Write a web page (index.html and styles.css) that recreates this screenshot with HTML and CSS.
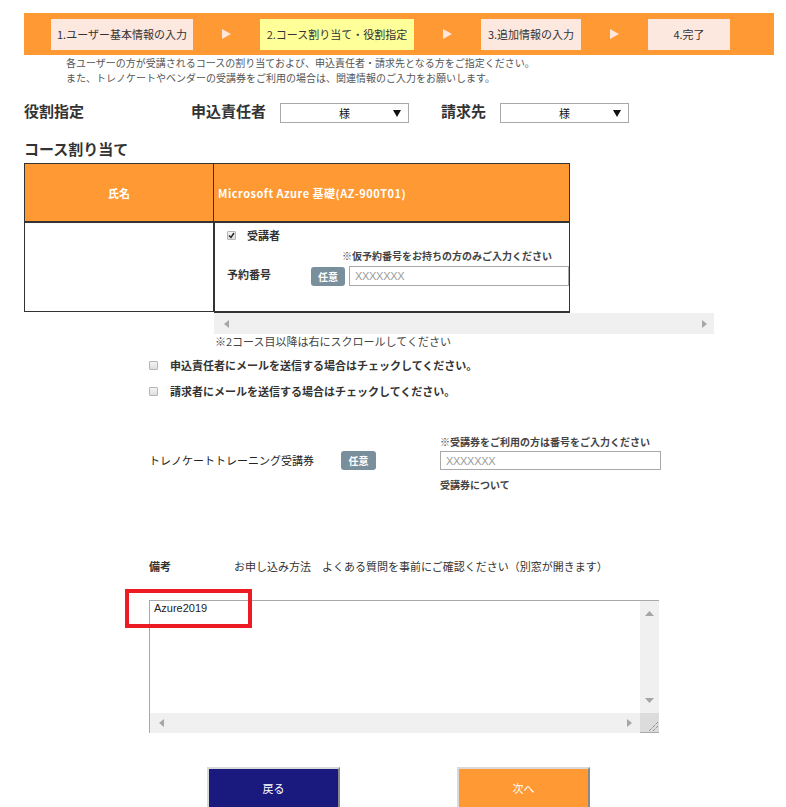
FILE: index.html
```html
<!DOCTYPE html>
<html lang="ja">
<head>
<meta charset="utf-8">
<title>コース割り当て・役割指定</title>
<link rel="stylesheet" href="styles.css">
</head>
<body>
<div class="page">
  <div class="steps">
    <div class="step s1">1.ユーザー基本情報の入力</div>
    <div class="arrow"><svg width="9" height="10" viewBox="0 0 9 10"><polygon points="0,0 9,5 0,10" fill="#fde6dc"/></svg></div>
    <div class="step s2 current">2.コース割り当て・役割指定</div>
    <div class="arrow"><svg width="9" height="10" viewBox="0 0 9 10"><polygon points="0,0 9,5 0,10" fill="#fde6dc"/></svg></div>
    <div class="step s3">3.追加情報の入力</div>
    <div class="arrow"><svg width="9" height="10" viewBox="0 0 9 10"><polygon points="0,0 9,5 0,10" fill="#fde6dc"/></svg></div>
    <div class="step s4">4.完了</div>
  </div>

  <div class="notice">
    <p>各ユーザーの方が受講されるコースの割り当ておよび、申込責任者・請求先となる方をご指定ください。</p>
    <p>また、トレノケートやベンダーの受講券をご利用の場合は、関連情報のご入力をお願いします。</p>
  </div>

  <div class="roles">
    <h2 class="roles-title">役割指定</h2>
    <span class="role-label">申込責任者</span>
    <div class="select"><span class="select-value">様</span><svg class="select-arrow" width="8" height="7" viewBox="0 0 8 7"><polygon points="0,0 8,0 4,7" fill="#111"/></svg></div>
    <span class="role-label billing">請求先</span>
    <div class="select"><span class="select-value">様</span><svg class="select-arrow" width="8" height="7" viewBox="0 0 8 7"><polygon points="0,0 8,0 4,7" fill="#111"/></svg></div>
  </div>

  <h2 class="section-title">コース割り当て</h2>

  <div class="course-area">
    <div class="name-col">
      <div class="th center">氏名</div>
      <div class="td"></div>
    </div>
    <div class="course-scroll">
      <div class="course-col">
        <div class="th course-th">Microsoft Azure 基礎(AZ-900T01)</div>
        <div class="td course-cell">
          <div class="attendee"><span class="cb checked"><svg width="7" height="7" viewBox="0 0 7 7"><polyline points="1,3.5 3,5.5 6,1" fill="none" stroke="#222" stroke-width="1.4"/></svg></span><span>受講者</span></div>
          <p class="cell-note">※仮予約番号をお持ちの方のみご入力ください</p>
          <div class="reserve-row">
            <span class="reserve-label">予約番号</span>
            <span class="badge">任意</span>
            <input class="text-input reserve-input" type="text" placeholder="XXXXXXX">
          </div>
        </div>
      </div>
      <div class="hbar course-hbar">
        <svg width="5" height="8" viewBox="0 0 5 8"><polygon points="5,0 0,4 5,8" fill="#a6a6a6"/></svg>
        <svg width="5" height="8" viewBox="0 0 5 8"><polygon points="0,0 5,4 0,8" fill="#a6a6a6"/></svg>
      </div>
    </div>
  </div>

  <p class="scroll-note">※2コース目以降は右にスクロールしてください</p>

  <div class="mail-checks">
    <div class="mail-row"><span class="cb"></span><span>申込責任者にメールを送信する場合はチェックしてください。</span></div>
    <div class="mail-row"><span class="cb"></span><span>請求者にメールを送信する場合はチェックしてください。</span></div>
  </div>

  <div class="voucher">
    <span class="voucher-label">トレノケートトレーニング受講券</span>
    <span class="badge voucher-badge">任意</span>
    <div class="voucher-field">
      <p class="field-note">※受講券をご利用の方は番号をご入力ください</p>
      <input class="text-input voucher-input" type="text" placeholder="XXXXXXX">
      <p class="field-link">受講券について</p>
    </div>
  </div>

  <div class="remarks">
    <span class="remarks-label">備考</span>
    <span class="remarks-text">お申し込み方法　よくある質問を事前にご確認ください（別窓が開きます）</span>
  </div>

  <div class="memo">
    <div class="memo-grid">
      <textarea class="memo-text">Azure2019</textarea>
      <div class="vbar">
        <svg width="9" height="5" viewBox="0 0 9 5"><polygon points="0,5 4.5,0 9,5" fill="#a6a6a6"/></svg>
        <svg width="9" height="5" viewBox="0 0 9 5"><polygon points="0,0 9,0 4.5,5" fill="#a6a6a6"/></svg>
      </div>
      <div class="hbar memo-hbar">
        <svg width="5" height="8" viewBox="0 0 5 8"><polygon points="5,0 0,4 5,8" fill="#a6a6a6"/></svg>
        <svg width="5" height="8" viewBox="0 0 5 8"><polygon points="0,0 5,4 0,8" fill="#a6a6a6"/></svg>
      </div>
      <div class="corner"><svg width="12" height="12" viewBox="0 0 12 12"><line x1="11" y1="2" x2="2" y2="11" stroke="#666" stroke-width="1" stroke-dasharray="1 1"/><line x1="11" y1="6" x2="6" y2="11" stroke="#666" stroke-width="1" stroke-dasharray="1 1"/></svg></div>
    </div>
    <div class="highlight"></div>
  </div>

  <div class="actions">
    <button class="btn back" type="button">戻る</button>
    <button class="btn next" type="button">次へ</button>
  </div>
</div>
</body>
</html>
```

FILE: styles.css
```css
* { box-sizing: border-box; }

html, body {
  margin: 0;
  padding: 0;
  background: #fff;
}

body {
  font-family: "Noto Sans CJK JP", "Noto Sans", sans-serif;
  color: #333;
  font-size: 11px;
}

p { margin: 0; }
h2 { margin: 0; }

.page {
  width: 786px;
  padding-top: 13px;
}

/* step bar */
.steps {
  margin-left: 24px;
  width: 750px;
  height: 42px;
  background: #ff9933;
  display: flex;
  align-items: center;
  padding-left: 27px;
}

.step {
  height: 31px;
  background: #fde8df;
  display: flex;
  align-items: center;
  justify-content: center;
  font-size: 11px;
  color: #333;
  white-space: nowrap;
}

.step.current { background: #ffff99; }
.s1 { width: 142px; }
.s2 { width: 154px; }
.s3 { width: 100px; }
.s4 { width: 82px; }

.arrow {
  width: 67px;
  display: flex;
  justify-content: center;
  align-items: center;
}

.arrow svg { display: block; }

/* notice */
.notice {
  padding-left: 66px;
  font-size: 10px;
  line-height: 15px;
  color: #555;
}

/* roles */
.roles {
  margin-top: 18px;
  margin-left: 24px;
  display: flex;
  align-items: center;
  height: 20px;
}

.roles-title {
  width: 167px;
  font-size: 15px;
  font-weight: bold;
  color: #333;
  line-height: 20px;
  position: relative;
  top: -2px;
}

.role-label {
  width: 89px;
  font-size: 15px;
  font-weight: bold;
  color: #333;
  line-height: 20px;
  position: relative;
  top: -2px;
}

.role-label.billing {
  width: 59px;
  margin-left: 32px;
}

.select {
  width: 129px;
  height: 20px;
  border: 1px solid #a9a9a9;
  background: #fff;
  display: grid;
  grid-template-columns: 1fr auto 1fr;
  align-items: center;
  padding-right: 7px;
}

.select-value {
  grid-column: 2;
  font-size: 11px;
  color: #111;
  line-height: 18px;
  margin-left: 7px;
}

.select-arrow {
  grid-column: 3;
  justify-self: end;
  display: block;
}

/* course */
.section-title {
  margin: 16px 0 4px 24px;
  font-size: 15px;
  font-weight: bold;
  line-height: 20px;
  color: #333;
}

.course-area {
  margin-left: 24px;
  display: flex;
  align-items: flex-start;
}

.name-col {
  width: 190px;
  border: 1px solid #333;
}

.th {
  height: 59px;
  background: #ff9933;
  color: #fff;
  font-weight: bold;
  font-size: 11px;
  display: flex;
  align-items: center;
  padding-left: 4px;
  border-bottom: 2px solid #333;
  white-space: nowrap;
}

.th.center {
  justify-content: center;
  padding-left: 0;
}

.course-th {
  letter-spacing: 0.5px;
}

.td {
  height: 88px;
  background: #fff;
}

.course-scroll {
  width: 500px;
}

.course-col {
  width: 356px;
  border: 1px solid #333;
  border-left: none;
  border-bottom-width: 2px;
}

.course-cell {
  padding: 4px 0 0 12px;
  border-left: 1px solid #333;
  height: 88px;
}

.attendee {
  display: flex;
  align-items: center;
  height: 16px;
  font-size: 11px;
  font-weight: bold;
  color: #333;
}

.cb {
  width: 9px;
  height: 9px;
  border: 1px solid #b5b5b5;
  border-radius: 1px;
  background: linear-gradient(#f4f4f4, #dedede);
  display: inline-flex;
  align-items: center;
  justify-content: center;
  flex: none;
}

.attendee .cb { margin-right: 11px; }

.cb svg { display: block; }

.cell-note {
  margin-top: 6px;
  margin-left: 115px;
  font-size: 10px;
  line-height: 14px;
  font-weight: bold;
  color: #444;
  white-space: nowrap;
}

.reserve-row {
  margin-top: 3px;
  display: flex;
  align-items: center;
}

.reserve-label {
  width: 84px;
  font-size: 11px;
  font-weight: bold;
  color: #333;
  position: relative;
  top: -2px;
}

.badge {
  width: 34px;
  height: 19px;
  border-radius: 3px;
  background: #7a8f9c;
  color: #fff;
  font-size: 10px;
  font-weight: bold;
  display: inline-flex;
  align-items: center;
  justify-content: center;
  flex: none;
}

.text-input {
  height: 20px;
  border: 1px solid #a9a9a9;
  padding: 0 5px;
  font-family: "Liberation Sans", "Noto Sans", sans-serif;
  font-size: 11px;
  color: #333;
  background: #fff;
  outline: none;
}

.text-input::placeholder {
  color: #9a9a9a;
  letter-spacing: -0.3px;
}

.reserve-input {
  width: 220px;
  margin-left: 4px;
}

.hbar {
  background: #f0f0f0;
  display: flex;
  align-items: center;
  justify-content: space-between;
}

.hbar svg { display: block; }

.course-hbar {
  height: 21px;
  padding: 0 7px 0 10px;
}

.scroll-note {
  margin-left: 215px;
  font-size: 11px;
  line-height: 14px;
  color: #444;
}

/* mail checks */
.mail-checks {
  margin-top: 4px;
  padding-left: 149px;
}

.mail-row {
  height: 26px;
  display: flex;
  align-items: center;
  font-size: 11px;
  font-weight: bold;
  color: #333;
}

.mail-row .cb { margin-right: 12px; }

/* voucher */
.voucher {
  margin-top: 31px;
  padding-left: 149px;
  display: flex;
  align-items: flex-start;
}

.voucher-label {
  width: 192px;
  padding-top: 16px;
  line-height: 19px;
  font-size: 11px;
  color: #222;
}

.voucher-badge {
  width: 35px;
  margin-top: 16px;
  margin-right: 64px;
}

.voucher-field {
  width: 221px;
}

.field-note {
  font-size: 10px;
  line-height: 14px;
  font-weight: bold;
  color: #444;
  white-space: nowrap;
}

.voucher-input {
  display: block;
  width: 221px;
  height: 19px;
  margin-top: 2px;
}

.field-link {
  margin-top: 8px;
  font-size: 10px;
  line-height: 14px;
  font-weight: bold;
  color: #444;
}

/* remarks */
.remarks {
  margin-top: 66px;
  padding-left: 149px;
  display: flex;
  line-height: 16px;
}

.remarks-label {
  width: 85px;
  font-size: 11px;
  font-weight: bold;
  color: #333;
}

.remarks-text {
  font-size: 11px;
  color: #333;
}

/* memo */
.memo {
  position: relative;
  margin-top: 26px;
  margin-left: 149px;
  width: 510px;
}

.memo-grid {
  display: grid;
  grid-template-columns: 1fr 19px;
  grid-template-rows: 112px 20px;
  border-top: 1px solid #a9a9a9;
  border-left: 1px solid #a9a9a9;
}

.memo-text {
  border: none;
  resize: none;
  outline: none;
  padding: 0 4px;
  margin: 0;
  font-family: "Liberation Sans", "Noto Sans", sans-serif;
  font-size: 11px;
  line-height: 14px;
  color: #222;
  background: #fff;
  overflow: hidden;
}

.vbar {
  background: #f0f0f0;
  display: flex;
  flex-direction: column;
  align-items: center;
  justify-content: space-between;
  padding: 10px 0 10px;
}

.vbar svg { display: block; }

.memo-hbar {
  padding: 0 8px 0 9px;
}

.corner {
  background: #dcdcdc;
  display: flex;
  align-items: flex-end;
  justify-content: flex-end;
  border-bottom: 1px solid #a9a9a9;
}

.corner svg { display: block; }

.highlight {
  position: absolute;
  left: -24px;
  top: -11px;
  width: 127px;
  height: 39px;
  border: 4px solid #ed1c24;
  pointer-events: none;
}

/* actions */
.actions {
  margin-top: 34px;
  padding-left: 207px;
  display: flex;
  gap: 117px;
}

.btn {
  width: 133px;
  height: 42px;
  border: 2px solid;
  border-color: #d9d9d9 #8a8a8a #8a8a8a #d9d9d9;
  color: #fff;
  font-family: "Noto Sans CJK JP", "Noto Sans", sans-serif;
  font-size: 11px;
  padding: 0;
  cursor: pointer;
}

.btn.back { background: #1a1a7e; }
.btn.next { background: #ff9933; }
```
